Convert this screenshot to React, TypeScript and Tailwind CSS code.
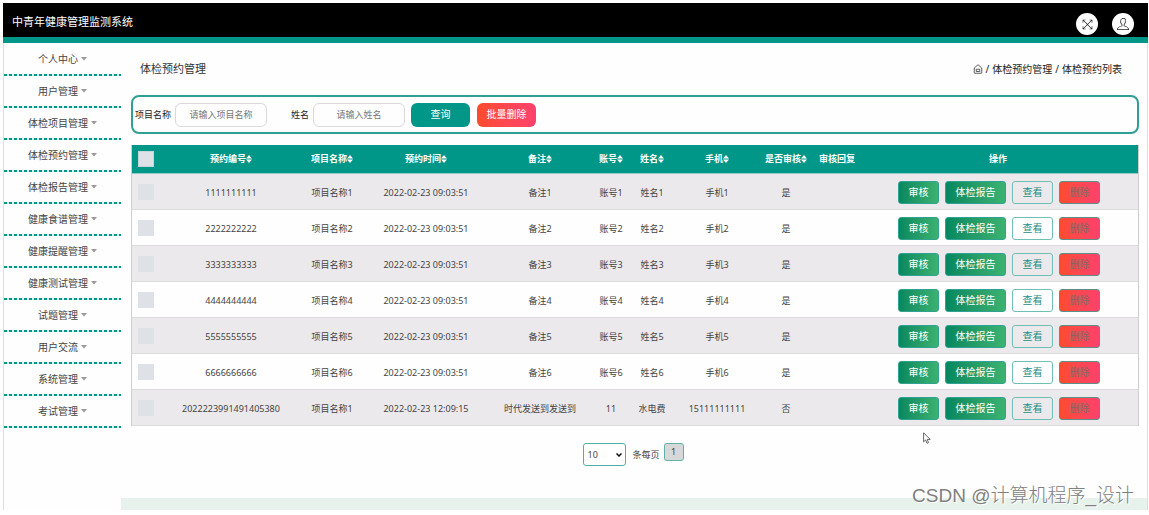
import { TfiFullscreen, TfiUser } from 'react-icons/tfi';

const menu = [
	'个人中心',
	'用户管理',
	'体检项目管理',
	'体检预约管理',
	'体检报告管理',
	'健康食谱管理',
	'健康提醒管理',
	'健康测试管理',
	'试题管理',
	'用户交流',
	'系统管理',
	'考试管理',
];

const columns = [
	{ label: '预约编号', width: 'w-[130px]', sortable: true },
	{ label: '项目名称', width: 'w-[72px]', sortable: true },
	{ label: '预约时间', width: 'w-[116px]', sortable: true },
	{ label: '备注', width: 'w-[112px]', sortable: true },
	{ label: '账号', width: 'w-[30px]', sortable: true },
	{ label: '姓名', width: 'w-[52px]', sortable: true },
	{ label: '手机', width: 'w-[78px]', sortable: true },
	{ label: '是否审核', width: 'w-[60px]', sortable: true },
	{ label: '审核回复', width: 'w-[42px]', sortable: false },
	{ label: '操作', width: 'w-[280px]', sortable: false },
];

const rows = [
	['1111111111', '项目名称1', '2022-02-23 09:03:51', '备注1', '账号1', '姓名1', '手机1', '是', ''],
	['2222222222', '项目名称2', '2022-02-23 09:03:51', '备注2', '账号2', '姓名2', '手机2', '是', ''],
	['3333333333', '项目名称3', '2022-02-23 09:03:51', '备注3', '账号3', '姓名3', '手机3', '是', ''],
	['4444444444', '项目名称4', '2022-02-23 09:03:51', '备注4', '账号4', '姓名4', '手机4', '是', ''],
	['5555555555', '项目名称5', '2022-02-23 09:03:51', '备注5', '账号5', '姓名5', '手机5', '是', ''],
	['6666666666', '项目名称6', '2022-02-23 09:03:51', '备注6', '账号6', '姓名6', '手机6', '是', ''],
	['2022223991491405380', '项目名称1', '2022-02-23 12:09:15', '时代发送到发送到', '11', '水电费', '15111111111', '否', ''],
];

function HomeIcon() {
	return (
		<svg viewBox="0 0 20 20" className="h-[10px] w-[10px]" fill="none" stroke="#333" strokeWidth="1.6" aria-hidden="true">
			<path d="M2.500 8 10 1.500 17.500 8v9.500q0 1-1 1h-13q-1 0-1-1z" />
			<path d="M6.500 15v-4.500h7V15M6.500 15h7" />
		</svg>
	);
}

function SortIcon() {
	return (
		<svg viewBox="0 0 6 8" className="h-2 w-[6px] shrink-0" fill="currentColor" aria-hidden="true">
			<path d="M3 0 6 3.4H0zM3 8 0 4.6h6z" />
		</svg>
	);
}

function Header() {
	return (
		<header className="flex h-10 items-center justify-between border-b-6 border-[#009688] bg-black pr-[14px] pl-[9px] text-white">
			<h1 className="pt-[5px] text-[11px]">中青年健康管理监测系统</h1>
			<div className="flex gap-[14px] pt-2 text-[#222]">
				<button type="button" aria-label="全屏" className="flex h-[22px] w-[22px] items-center justify-center rounded-full bg-white">
					<TfiFullscreen className="h-[11px] w-[11px]" />
				</button>
				<button type="button" aria-label="用户" className="flex h-[22px] w-[22px] items-center justify-center rounded-full bg-white">
					<TfiUser className="h-3 w-3" />
				</button>
			</div>
		</header>
	);
}

function Sidebar() {
	return (
		<nav className="w-[117px] shrink-0 pt-px">
			<ul>
				{menu.map((item) => (
					<li key={item} className="flex h-8 flex-col">
						<a href="#" className="flex flex-1 items-center justify-center gap-[3px] text-[10px] text-[#444]">
							{item}
							<svg viewBox="0 0 6 4" className="h-1 w-[6px]" fill="#999" aria-hidden="true">
								<path d="M0 0h6L3 3.5z" />
							</svg>
						</a>
						<div className="h-[2px] bg-[repeating-linear-gradient(90deg,#009688_0_3px,#d5eeeb_3px_5px)]" />
					</li>
				))}
			</ul>
		</nav>
	);
}

function Filters() {
	return (
		<form className="flex h-[39px] items-center rounded-lg border-2 border-[#2f9f94] px-[2px] text-[9px] text-[#222]">
			<label htmlFor="project">项目名称</label>
			<input
				id="project"
				placeholder="请输入项目名称"
				className="ml-1 h-6 w-[92px] rounded-md border border-[#d9d9d9] text-center placeholder:text-[#777]"
			/>
			<label htmlFor="name" className="ml-6">姓名</label>
			<input
				id="name"
				placeholder="请输入姓名"
				className="ml-1 h-6 w-[92px] rounded-md border border-[#d9d9d9] text-center placeholder:text-[#777]"
			/>
			<button type="button" className="ml-[6px] h-6 w-[59px] rounded-md bg-[#009688] text-[10px] text-white">查询</button>
			<button type="button" className="ml-[7px] h-6 w-[59px] rounded-md bg-linear-to-r from-[#ff4b2b] to-[#ff416c] text-[10px] text-white">
				批量删除
			</button>
		</form>
	);
}

function RowActions() {
	return (
		<div className="flex justify-center gap-[6px] pl-[2px] text-[10px]">
			<button type="button" className="h-[23px] w-[41px] rounded-[3px] border border-[#2fa292] bg-linear-to-r from-[#02875f] to-[#3cb371] bg-origin-border text-white">
				审核
			</button>
			<button type="button" className="h-[23px] w-[61px] rounded-[3px] border border-[#2fa292] bg-linear-to-r from-[#02875f] to-[#3cb371] bg-origin-border text-white">
				体检报告
			</button>
			<button type="button" className="h-[23px] w-[41px] rounded-[3px] border border-[#6fbfb7] text-[#1f8f84]">查看</button>
			<button type="button" className="h-[23px] w-[41px] rounded-[3px] border border-[#5c8f88] bg-linear-to-r from-[#ff4b2b] to-[#ff416c] bg-origin-border text-[#7d6a66]">
				删除
			</button>
		</div>
	);
}

function AppointmentTable() {
	return (
		<table className="mt-[11px] w-full table-fixed border-separate border-spacing-0 border-x border-[#cfcfcf] text-center text-[9px] text-[#444]">
			<thead>
				<tr className="h-[29px] bg-[#009688] text-white">
					<th className="w-[34px] border-b border-[#8fcac4] p-0 pl-[6px]">
						<input type="checkbox" aria-label="全选" className="block h-4 w-4 appearance-none border border-[#c8d6da] bg-[#dee2e6]" />
					</th>
					{columns.map((column) => (
						<th key={column.label} className={`${column.width} border-b border-[#8fcac4] p-0 font-bold whitespace-nowrap`}>
							<span className="inline-flex items-center">
								{column.label}
								{column.sortable && <SortIcon />}
							</span>
						</th>
					))}
				</tr>
			</thead>
			<tbody>
				{rows.map((row) => (
					<tr key={row[0]} className="h-9 odd:bg-[#ebe9eb]">
						<td className="border-b border-[#dcdcdc] p-0 pt-px pl-[6px]">
							<input type="checkbox" aria-label={row[0]} className="block h-4 w-4 appearance-none bg-[#dee2e6]" />
						</td>
						{row.map((value, i) => (
							<td key={i} className="border-b border-[#dcdcdc] p-0 pt-[2px] whitespace-nowrap">{value}</td>
						))}
						<td className="border-b border-[#dcdcdc] p-0 pt-[2px]">
							<RowActions />
						</td>
					</tr>
				))}
			</tbody>
		</table>
	);
}

function Pagination() {
	return (
		<div className="mt-[17px] flex justify-center pr-[3px] text-[9px] text-[#444]">
			<div className="relative h-[23px] w-[43px]">
				<select aria-label="条每页" className="h-full w-full appearance-none rounded-[3px] border border-[#4fb0a7] bg-white pl-[3px]">
					<option>10</option>
				</select>
				<svg viewBox="0 0 6 4" className="pointer-events-none absolute top-[10px] right-1 h-1 w-[6px]" fill="none" stroke="#111" strokeWidth="1.5" aria-hidden="true">
					<path d="M.5.5 3 3 5.5.5" />
				</svg>
			</div>
			<span className="ml-[6px] self-center">条每页</span>
			<button type="button" className="ml-1 h-[18px] w-5 rounded-[3px] border border-[#5fb0a8] bg-[#d8d8d8]">1</button>
		</div>
	);
}

export default function App() {
	return (
		<div className="relative flex min-h-screen flex-col bg-white pt-[3px] pr-px pb-[5px] pl-[3px] font-['Noto_Sans','Noto_Sans_CJK_SC',sans-serif]">
			<Header />
			<div className="flex flex-1 border-x border-[#dedede] bg-[#fefefe]">
				<Sidebar />
				<div className="flex min-w-0 flex-1 flex-col">
					<main className="flex-1 pr-2 pl-[10px]">
						<div className="flex h-[52px] items-center justify-between pr-[17px] pl-[9px]">
							<h2 className="text-[11px] text-[#333]">体检预约管理</h2>
							<div className="flex items-center gap-[3px] text-[10px] text-[#222]">
								<a href="#" aria-label="首页"><HomeIcon /></a>
								<span>/</span>
								<a href="#">体检预约管理</a>
								<span>/</span>
								<span>体检预约列表</span>
							</div>
						</div>
						<Filters />
						<AppointmentTable />
						<Pagination />
					</main>
					<footer className="h-3 bg-[#e8f2ed]" />
				</div>
			</div>
			<svg viewBox="0 0 8 12" className="absolute top-[432px] left-[923px] h-3 w-2" fill="#fff" stroke="#555" strokeWidth="0.9" aria-hidden="true">
				<path d="M.6.8v9l2-1.8 1.4 3.300 1.500-.7L4.200 7.400h3z" />
			</svg>
			<p className="absolute right-[15px] bottom-[5px] font-['Liberation_Sans','Noto_Sans_CJK_SC',sans-serif] text-[19px] leading-7 font-light text-[#808080] [text-shadow:1px_1px_0_#fff]">
				CSDN @计算机程序_设计
			</p>
		</div>
	);
}
